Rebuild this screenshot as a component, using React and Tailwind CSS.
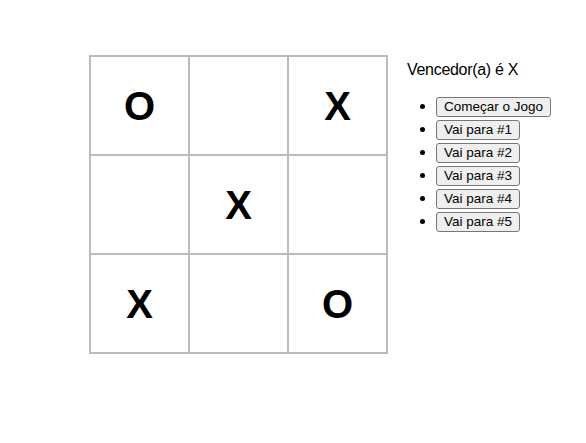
import React from "react";

const squares = ["O", "", "X", "", "X", "", "X", "", "O"];
const moves = ["Começar o Jogo", "Vai para #1", "Vai para #2", "Vai para #3", "Vai para #4", "Vai para #5"];

export default function App() {
  return (
    <div className="w-[586px] h-[443px] bg-white pl-[89px] pt-[55px] flex items-start" style={{ fontFamily: '"Liberation Sans", Arial, sans-serif' }}>
      <div className="grid grid-cols-3 border border-[#bbb] w-[299px] h-[299px]">
        {squares.map((s, i) => (
          <div key={i} className="w-[99px] h-[99px] border border-[#bbb] flex items-center justify-center text-[40px] font-bold text-black leading-none">
            {s}
          </div>
        ))}
      </div>
      <div className="ml-[19px] pt-[6px] text-black">
        <div className="text-[16px] leading-[18px] tracking-[-0.3px]">Vencedor(a) é X</div>
        <ul className="list-disc pl-[29px] mt-[15px]">
          {moves.map((m, i) => (
            <li key={i} className="text-[16px] leading-[23px] h-[23px]">
              <button className="bg-[#efefef] border border-[#767676] rounded-[3px] px-[7px] h-[20px] text-[13.5px] leading-[16px] text-black align-middle">
                {m}
              </button>
            </li>
          ))}
        </ul>
      </div>
    </div>
  );
}
